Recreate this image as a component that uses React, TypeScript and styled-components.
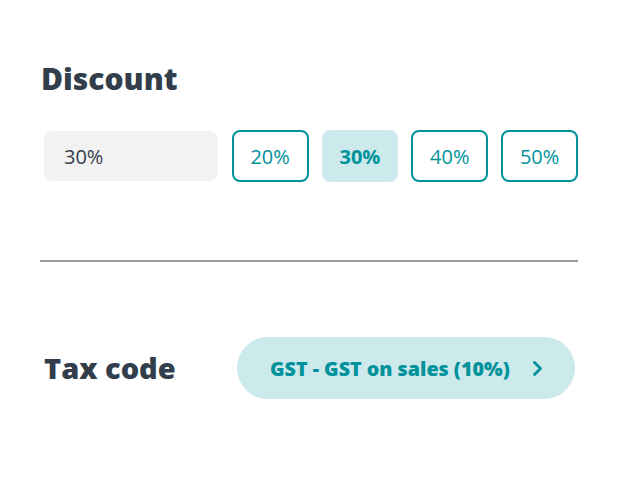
import styled, { createGlobalStyle } from "styled-components";

const GlobalStyle = createGlobalStyle`
  html, body {
    margin: 0;
    padding: 0;
    background: #ffffff;
    font-family: "Open Sans", "Noto Sans", sans-serif;
  }
`;

const teal = "#00929b";
const tealLight = "#cce9eb";
const ink = "#333e4c";

const Page = styled.div`
  width: 620px;
  height: 480px;
  box-sizing: border-box;
  padding: 61px 42px 0 40px;
`;

const Heading = styled.h2`
  margin: 0 0 0 1px;
  font-size: 30px;
  line-height: 36px;
  font-weight: 800;
  color: ${ink};
`;

const OptionsRow = styled.div`
  display: flex;
  align-items: center;
  gap: 13px;
  margin: 33px 0 0 4px;
  height: 52px;
`;

const AmountField = styled.div`
  width: 174px;
  height: 50px;
  margin-right: 1px;
  box-sizing: border-box;
  padding-left: 20px;
  display: flex;
  align-items: center;
  border-radius: 8px;
  background: #f2f2f2;
  color: ${ink};
  font-size: 20px;
`;

const Preset = styled.button<{ $active?: boolean }>`
  width: 77px;
  height: 52px;
  box-sizing: border-box;
  padding: 0;
  border-radius: 8px;
  border: 2px solid ${({ $active }) => ($active ? tealLight : teal)};
  background: ${({ $active }) => ($active ? tealLight : "#ffffff")};
  color: ${teal};
  font-family: inherit;
  font-size: 20px;
  font-weight: ${({ $active }) => ($active ? 700 : 400)};
`;

const Divider = styled.hr`
  margin: 78px 0 0 0;
  border: none;
  height: 2px;
  width: 538px;
  background: #999999;
`;

const TaxRow = styled.div`
  display: grid;
  grid-template-columns: 193px 338px;
  align-items: center;
  margin: 75px 0 0 4px;
`;

const TaxLabel = styled.div`
  font-size: 29px;
  line-height: 38px;
  font-weight: 800;
  color: ${ink};
`;

const TaxPicker = styled.button`
  height: 62px;
  box-sizing: border-box;
  padding: 0 32px 0 33px;
  display: flex;
  align-items: center;
  justify-content: space-between;
  border: none;
  border-radius: 31px;
  background: ${tealLight};
  color: ${teal};
  font-family: inherit;
  font-size: 19.7px;
  font-weight: 800;
`;

const presets = [
  { label: "20%" },
  { label: "30%", active: true },
  { label: "40%" },
  { label: "50%" },
];

export default function App() {
  return (
    <>
      <GlobalStyle />
      <Page>
        <Heading>Discount</Heading>
        <OptionsRow>
          <AmountField>30%</AmountField>
          {presets.map((p) => (
            <Preset key={p.label} $active={p.active}>
              {p.label}
            </Preset>
          ))}
        </OptionsRow>
        <Divider />
        <TaxRow>
          <TaxLabel>Tax code</TaxLabel>
          <TaxPicker>
            <span>GST - GST on sales (10%)</span>
            <svg width="11" height="17" viewBox="0 0 11 17" fill="none">
              <polyline
                points="2.5,2.5 8.5,8.5 2.5,14.5"
                stroke={teal}
                strokeWidth="2.8"
                strokeLinecap="round"
                strokeLinejoin="round"
              />
            </svg>
          </TaxPicker>
        </TaxRow>
      </Page>
    </>
  );
}
